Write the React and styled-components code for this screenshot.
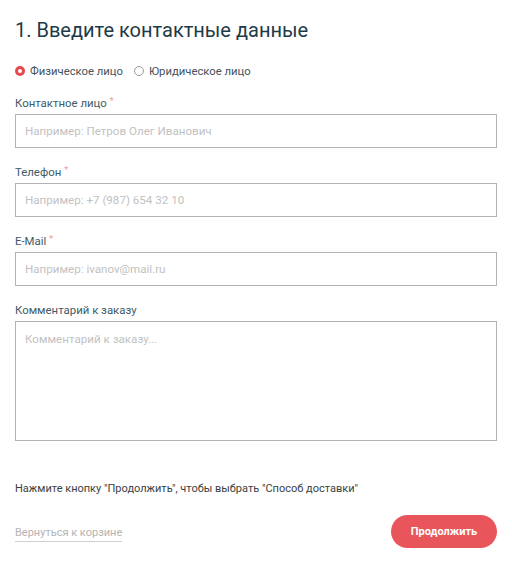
import React, { useState } from 'react'
import styled, { createGlobalStyle } from 'styled-components'

const GlobalStyle = createGlobalStyle`
  body {
    margin: 0;
    background: #fff;
    font-family: Roboto, 'Liberation Sans', sans-serif;
  }
  * { box-sizing: border-box; }
`

const Page = styled.div`
  width: 512px;
  padding: 15px 15px 0 15px;
`

const Title = styled.h1`
  margin: 0;
  font-size: 20px;
  line-height: 30px;
  font-weight: 400;
  color: #1d3b48;
`

const RadioRow = styled.div`
  display: flex;
  gap: 11px;
  margin-top: 18px;
  height: 16px;
  align-items: center;
`

const RadioLabel = styled.label`
  display: flex;
  align-items: center;
  gap: 5px;
  font-size: 11.3px;
  color: #44525a;
  cursor: pointer;
`

const RadioDot = styled.span`
  width: 10px;
  height: 10px;
  border-radius: 50%;
  display: inline-flex;
  align-items: center;
  justify-content: center;
  background: ${p => (p.checked ? '#e8474d' : '#fff')};
  border: ${p => (p.checked ? 'none' : '1px solid #9a9a9a')};
  &::after {
    content: '';
    width: 4px;
    height: 4px;
    border-radius: 50%;
    background: ${p => (p.checked ? '#fff' : 'transparent')};
  }
`

const Field = styled.div`
  margin-top: 16px;
`

const Label = styled.div`
  font-size: 11.4px;
  line-height: 16px;
  height: 16px;
  color: #3e5b67;
  margin-bottom: 3px;
`

const Star = styled.span`
  color: #f09a9a;
  margin-left: 3px;
  font-size: 9px;
  line-height: 12px;
  vertical-align: top;
`

const Input = styled.input`
  display: block;
  width: 482px;
  height: 34px;
  border: 1px solid #b3b3b3;
  padding: 0 9px;
  font-family: inherit;
  font-size: 11.6px;
  color: #333;
  outline: none;
  &::placeholder { color: #c2c2c2; }
`

const TextArea = styled.textarea`
  display: block;
  width: 482px;
  height: 120px;
  border: 1px solid #b3b3b3;
  padding: 10px 9px;
  font-family: inherit;
  font-size: 11.6px;
  resize: none;
  outline: none;
  &::placeholder { color: #c2c2c2; }
`

const Note = styled.p`
  margin: 40px 0 0 0;
  font-size: 11px;
  line-height: 16px;
  color: #3a3f42;
`

const Footer = styled.div`
  display: flex;
  justify-content: space-between;
  align-items: center;
  margin-top: 18px;
`

const BackLink = styled.a`
  font-size: 11px;
  color: #b4b4b4;
  text-decoration: none;
  border-bottom: 1px solid #cfcfcf;
  padding-bottom: 2px;
  margin-top: 4px;
`

const Button = styled.button`
  width: 106px;
  height: 33px;
  border: none;
  border-radius: 17px;
  background: #e8555a;
  color: #fff;
  font-family: inherit;
  font-size: 11px;
  font-weight: 700;
  cursor: pointer;
`

export default function App () {
  const [type, setType] = useState('person')

  return (
    <Page>
      <GlobalStyle />
      <Title>1. Введите контактные данные</Title>
      <RadioRow>
        <RadioLabel onClick={() => setType('person')}>
          <RadioDot checked={type === 'person'} />
          Физическое лицо
        </RadioLabel>
        <RadioLabel onClick={() => setType('company')}>
          <RadioDot checked={type === 'company'} />
          Юридическое лицо
        </RadioLabel>
      </RadioRow>
      <Field>
        <Label>Контактное лицо<Star>*</Star></Label>
        <Input placeholder='Например: Петров Олег Иванович' />
      </Field>
      <Field>
        <Label>Телефон<Star>*</Star></Label>
        <Input placeholder='Например: +7 (987) 654 32 10' />
      </Field>
      <Field>
        <Label>E-Mail<Star>*</Star></Label>
        <Input placeholder='Например: ivanov@mail.ru' />
      </Field>
      <Field>
        <Label>Комментарий к заказу</Label>
        <TextArea placeholder='Комментарий к заказу...' />
      </Field>
      <Note>Нажмите кнопку "Продолжить", чтобы выбрать "Способ доставки"</Note>
      <Footer>
        <BackLink href='#'>Вернуться к корзине</BackLink>
        <Button>Продолжить</Button>
      </Footer>
    </Page>
  )
}
